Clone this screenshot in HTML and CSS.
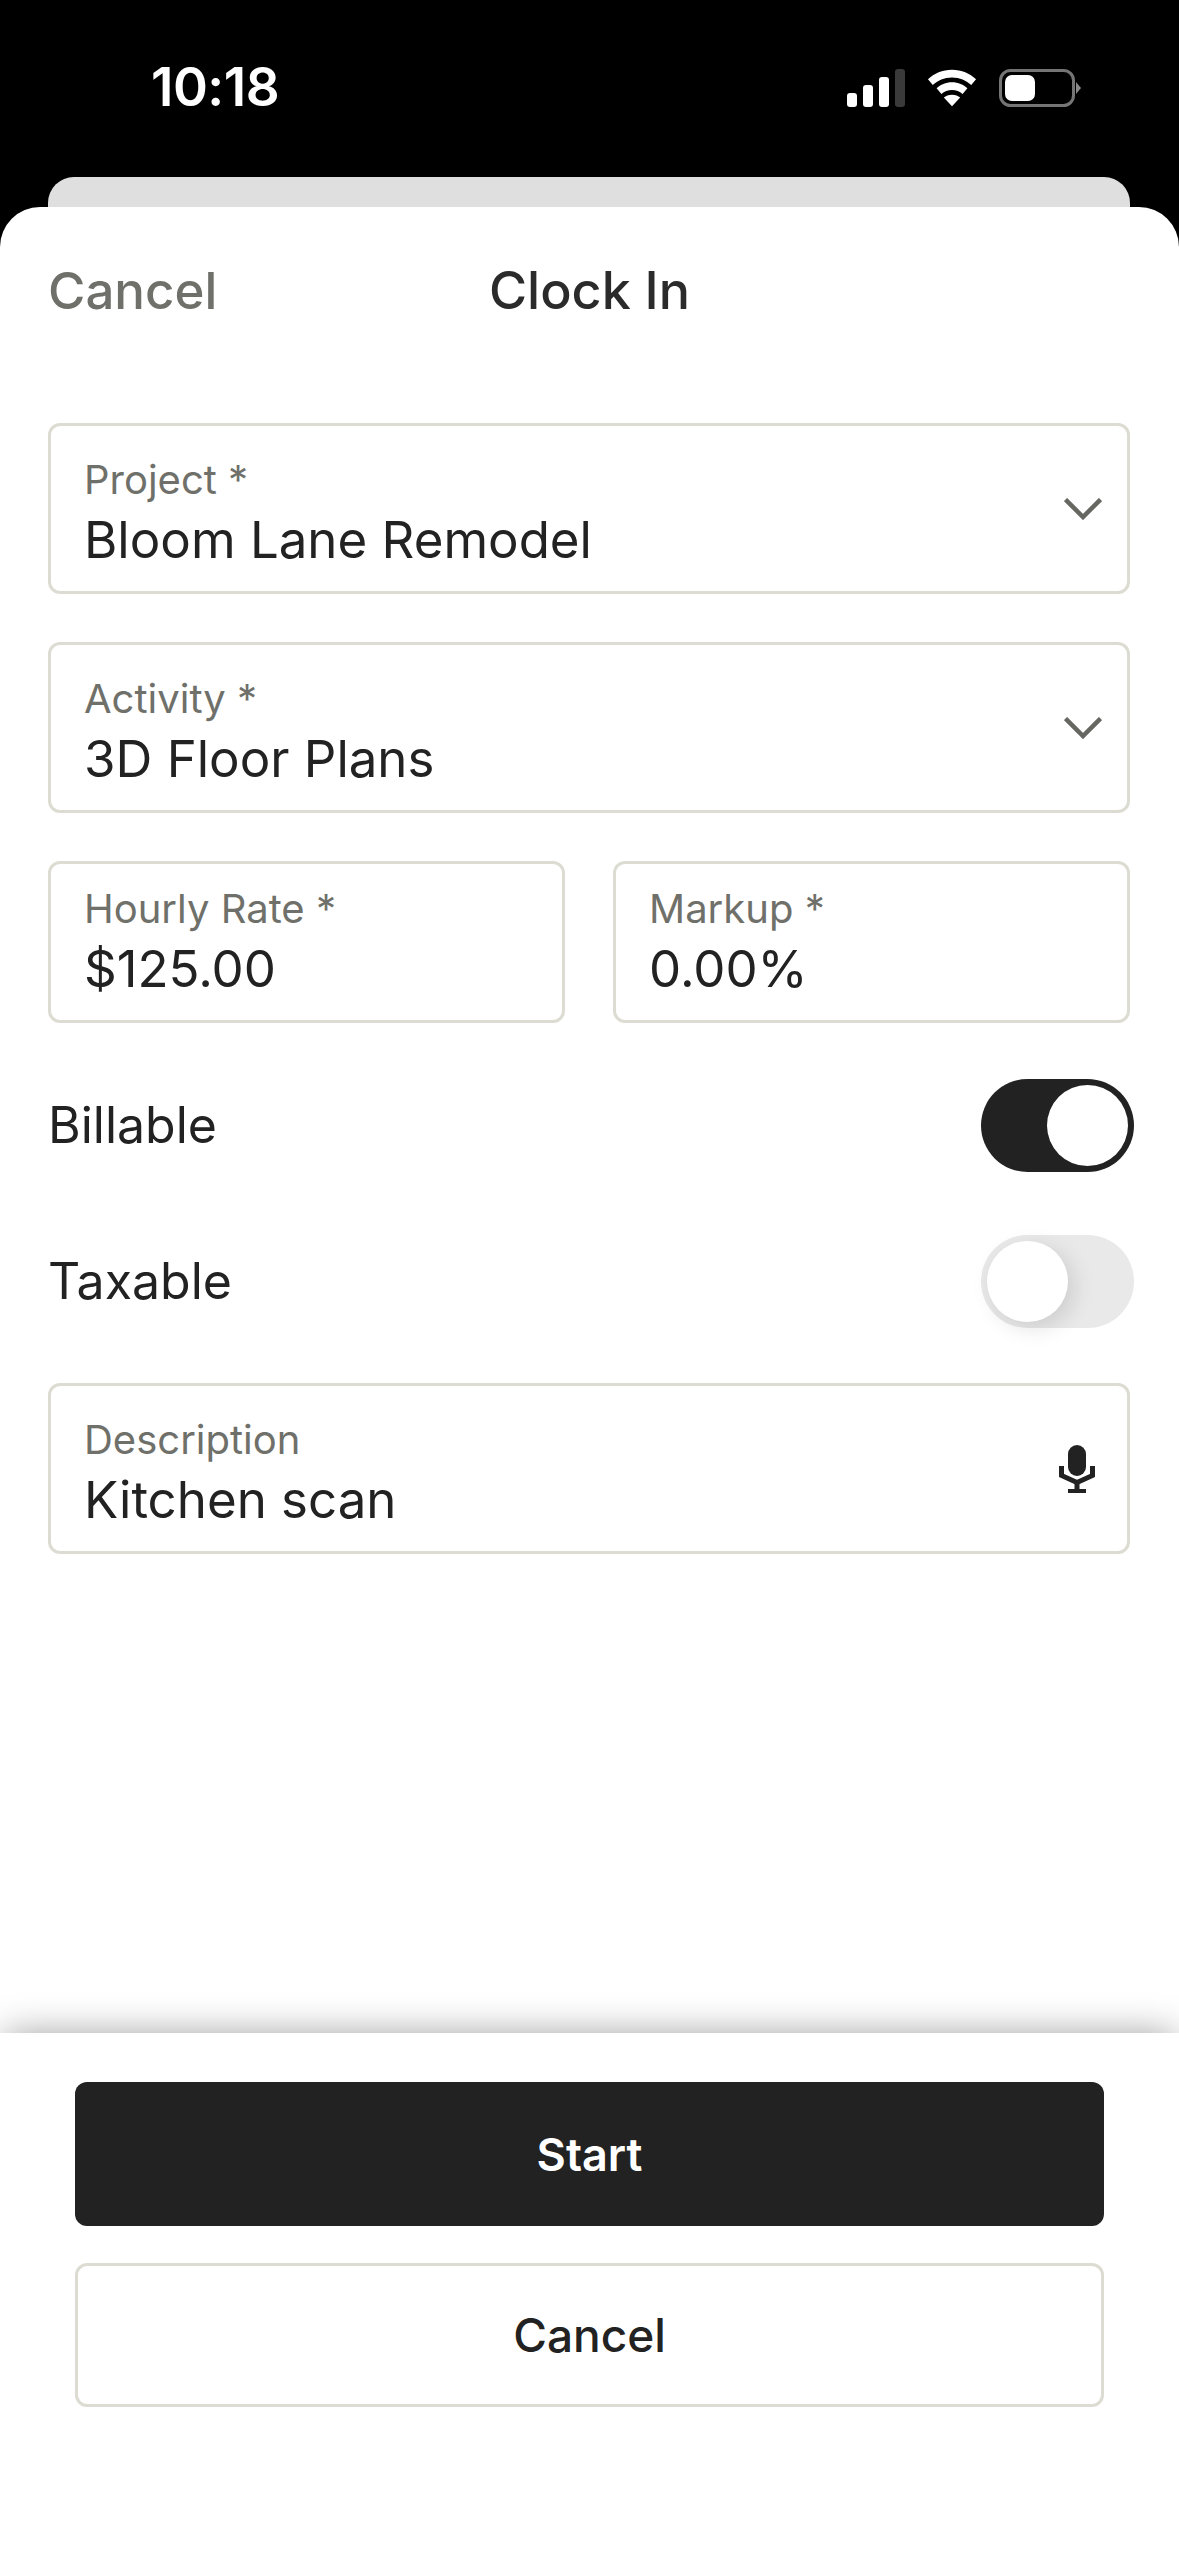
FILE: index.html
```html
<!DOCTYPE html>
<html lang="en">
<head>
<meta charset="utf-8">
<title>Clock In</title>
<link rel="stylesheet" href="styles.css">
</head>
<body>
<div class="screen">
  <div class="status">
    <span class="time">10:18</span>
    <div class="status-icons">
      <svg class="sig" width="58" height="38" viewBox="0 0 58 38"><rect x="0" y="24" width="10" height="14" rx="3" fill="#fff"/><rect x="16" y="16" width="10" height="22" rx="3" fill="#fff"/><rect x="32" y="8" width="10" height="30" rx="3" fill="#fff"/><rect x="48" y="0" width="10" height="38" rx="3" fill="#3a3a3a"/></svg>
      <svg class="wifi" width="50" height="38" viewBox="0 0 52 38"><path d="M26 0C16 0 7.500 3.800 1 10l5 6c5-5 12-8 20-8s15 3 20 8l5-6C44.500 3.800 36 0 26 0z" fill="#fff"/><path d="M26 13c-6.500 0-12 2.500-16 6.300l5 6c3-2.800 6.800-4.300 11-4.300s8 1.500 11 4.300l5-6C38 15.500 32.500 13 26 13z" fill="#fff"/><path d="M26 26c-3.500 0-6.500 1.200-8.500 3L26 38l8.500-9c-2-1.800-5-3-8.500-3z" fill="#fff"/></svg>
      <svg class="batt" width="82" height="38" viewBox="0 0 82 38"><rect x="1.500" y="1.500" width="73" height="35" rx="10" fill="none" stroke="#757575" stroke-width="3"/><rect x="6" y="6" width="30" height="26" rx="7" fill="#fff"/><path d="M77 13l5 6-5 6z" fill="#8a8a8a"/></svg>
    </div>
  </div>
  <div class="back-card"></div>
  <main class="sheet">
    <header class="nav">
      <span class="nav-cancel">Cancel</span>
      <h1 class="nav-title">Clock In</h1>
    </header>
    <form class="form">
      <div class="field field-tall">
        <div class="field-text"><span class="label">Project *</span><span class="value">Bloom Lane Remodel</span></div>
        <svg class="chev" width="38" height="22" viewBox="0 0 38 22"><path d="M1.500 1.500L19 19 36.500 1.500" fill="none" stroke="#666760" stroke-width="4.500"/></svg>
      </div>
      <div class="field field-tall">
        <div class="field-text"><span class="label">Activity *</span><span class="value">3D Floor Plans</span></div>
        <svg class="chev" width="38" height="22" viewBox="0 0 38 22"><path d="M1.500 1.500L19 19 36.500 1.500" fill="none" stroke="#666760" stroke-width="4.500"/></svg>
      </div>
      <div class="pair">
        <div class="field field-short"><div class="field-text"><span class="label">Hourly Rate *</span><span class="value">$125.00</span></div></div>
        <div class="field field-short"><div class="field-text"><span class="label">Markup *</span><span class="value">0.00%</span></div></div>
      </div>
      <div class="toggle-row">
        <span class="toggle-label">Billable</span>
        <span class="toggle toggle-on"><span class="knob"></span></span>
      </div>
      <div class="toggle-row toggle-row-off">
        <span class="toggle-label">Taxable</span>
        <span class="toggle toggle-off"><span class="knob"></span></span>
      </div>
      <div class="field field-tall field-desc">
        <div class="field-text"><span class="label">Description</span><span class="value">Kitchen scan</span></div>
        <svg class="mic" width="36" height="48" viewBox="0 0 36 48"><rect x="9" y="0" width="18" height="31" rx="9" fill="#222"/><path d="M2.500 21v9.500l15.500 7 15.500-7V21" fill="none" stroke="#222" stroke-width="5"/><path d="M18 36v9" stroke="#222" stroke-width="5"/><rect x="9" y="44" width="18" height="4" fill="#222"/></svg>
      </div>
    </form>
    <footer class="footer">
      <button class="btn btn-primary" type="button">Start</button>
      <button class="btn btn-secondary" type="button">Cancel</button>
    </footer>
  </main>
</div>
</body>
</html>
```
FILE: styles.css
```css
* { box-sizing: border-box; }
html, body { margin: 0; padding: 0; background: #000; }
body { font-family: "Inter", "Noto Sans", sans-serif; color: #222; }
.screen { width: 1179px; height: 2556px; display: flex; flex-direction: column; background: #000; overflow: hidden; }
.status { height: 177px; flex: none; display: flex; justify-content: space-between; align-items: flex-start; padding: 62px 98px 0 151px; }
.time { color: #fff; font-size: 53px; font-weight: 600; line-height: 50px; letter-spacing: -0.5px; }
.status-icons { display: flex; align-items: center; gap: 22px; padding-top: 7px; }
.back-card { height: 30px; flex: none; margin: 0 49px 0 48px; background: #dfdfdf; border-radius: 26px 26px 0 0; }
.sheet { flex: 1; display: flex; flex-direction: column; background: #fff; border-radius: 40px 40px 0 0; }
.nav { height: 216px; flex: none; position: relative; display: flex; justify-content: center; padding-top: 54px; }
.nav-cancel { position: absolute; left: 48px; top: 54px; font-size: 51px; line-height: 60px; font-weight: 500; color: #6f706a; }
.nav-title { margin: 0; font-size: 52px; line-height: 60px; font-weight: 500; color: #2b2b2b; }
.form { flex: 1; display: flex; flex-direction: column; padding: 0 49px 0 48px; }
.field { display: flex; align-items: center; justify-content: space-between; border: 3px solid #dddcd2; border-radius: 12px; padding: 0 25px 0 33px; background: #fff; }
.field-tall { height: 171px; margin-bottom: 48px; }
.field-short { height: 162px; flex: 1; }
.field-desc { margin-bottom: 0; padding-right: 32px; }
.field-text { display: flex; flex-direction: column; padding-top: 9px; }
.field-short .field-text { padding-top: 0; }
.label { font-size: 40px; line-height: 50px; color: #6f706a; }
.value { font-size: 51px; line-height: 62px; margin-top: 4px; color: #222; }
.pair { display: flex; gap: 48px; }
.toggle-row { display: flex; align-items: center; justify-content: space-between; height: 93px; margin: 56px -4px 0 0; }
.toggle-row-off { margin-top: 63px; margin-bottom: 55px; }
.toggle-label { font-size: 50px; line-height: 60px; color: #222; position: relative; top: -1px; }
.toggle { width: 153px; height: 93px; border-radius: 47px; display: flex; align-items: center; padding: 0 6px; }
.toggle-on { background: #222; justify-content: flex-end; }
.toggle-off { background: #e8e9e8; justify-content: flex-start; }
.knob { width: 81px; height: 81px; border-radius: 50%; background: #fff; }
.toggle-off .knob { box-shadow: 6px 6px 22px rgba(0,0,0,.12); }
.footer { flex: none; height: 523px; padding: 49px 75px 0; display: flex; flex-direction: column; gap: 37px; background: #fff; box-shadow: 0 -2px 36px -4px rgba(0,0,0,.4); position: relative; }
.btn { height: 144px; flex: none; width: 100%; border-radius: 12px; font-family: inherit; font-size: 46px; font-weight: 500; }
.btn-primary { background: #222; color: #fff; border: 0; font-weight: 600; font-size: 45px; }
.btn-secondary { background: #fff; color: #222; border: 3px solid #dddcd2; }
```
